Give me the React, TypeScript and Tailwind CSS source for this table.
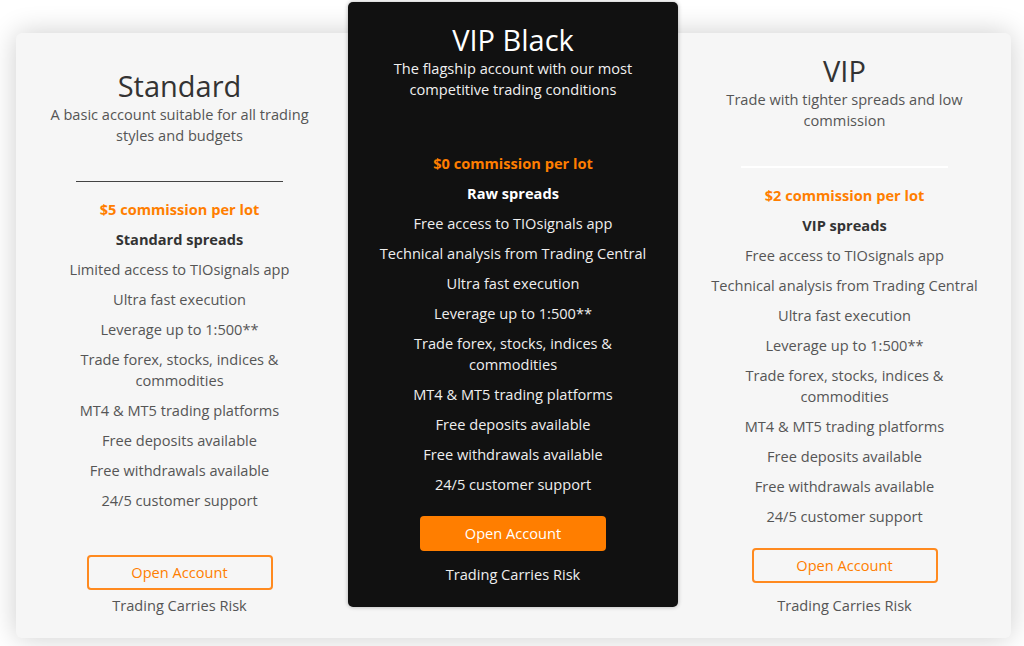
type Plan = {
  title: string;
  subtitle: string;
  commission: string;
  spreads: string;
  features: string[];
};

const standard: Plan = {
  title: "Standard",
  subtitle: "A basic account suitable for all trading styles and budgets",
  commission: "$5 commission per lot",
  spreads: "Standard spreads",
  features: [
    "Limited access to TIOsignals app",
    "Ultra fast execution",
    "Leverage up to 1:500**",
    "Trade forex, stocks, indices & commodities",
    "MT4 & MT5 trading platforms",
    "Free deposits available",
    "Free withdrawals available",
    "24/5 customer support",
  ],
};

const vipBlack: Plan = {
  title: "VIP Black",
  subtitle: "The flagship account with our most competitive trading conditions",
  commission: "$0 commission per lot",
  spreads: "Raw spreads",
  features: [
    "Free access to TIOsignals app",
    "Technical analysis from Trading Central",
    "Ultra fast execution",
    "Leverage up to 1:500**",
    "Trade forex, stocks, indices & commodities",
    "MT4 & MT5 trading platforms",
    "Free deposits available",
    "Free withdrawals available",
    "24/5 customer support",
  ],
};

const vip: Plan = {
  title: "VIP",
  subtitle: "Trade with tighter spreads and low commission",
  commission: "$2 commission per lot",
  spreads: "VIP spreads",
  features: [
    "Free access to TIOsignals app",
    "Technical analysis from Trading Central",
    "Ultra fast execution",
    "Leverage up to 1:500**",
    "Trade forex, stocks, indices & commodities",
    "MT4 & MT5 trading platforms",
    "Free deposits available",
    "Free withdrawals available",
    "24/5 customer support",
  ],
};

function PlanBody({ plan, dark }: { plan: Plan; dark?: boolean }) {
  return (
    <>
      <h2 className={`text-[29px] leading-[36px] font-normal ${dark ? "text-white" : "text-[#333]"}`}>{plan.title}</h2>
      <p className={`max-w-[272px] text-[14.6px] leading-[21px] ${dark ? "text-[#f0f0f0]" : "text-[#555]"}`}>{plan.subtitle}</p>
      <div
        className={`mt-[35px] w-[207px] border-t ${
          dark ? "border-[#111]" : plan.title === "VIP" ? "border-white border-t-2" : "border-[#444]"
        }`}
      />
      <ul className="mt-[17px] flex max-w-[270px] flex-col gap-[9px] text-[14.6px] leading-[21px]">
        <li className="font-bold text-[#ff7e00]">{plan.commission}</li>
        <li className={`font-bold ${dark ? "text-white" : "text-[#333]"}`}>{plan.spreads}</li>
        {plan.features.map((f) => (
          <li key={f} className={dark ? "text-[#eee]" : "text-[#555]"}>
            {f}
          </li>
        ))}
      </ul>
    </>
  );
}

export default function App() {
  return (
    <div
      className="h-[646px] w-[1024px] overflow-hidden bg-white pl-[16px] pt-[33px]"
      style={{ fontFamily: '"Open Sans", "Noto Sans", sans-serif' }}
    >
      <div className="grid h-[605px] w-[995px] grid-cols-[332px_330px_333px] rounded-[6px] bg-[#f6f6f6] text-center shadow-[0_0_28px_rgba(0,0,0,0.2)]">
        {/* Standard */}
        <div className="flex flex-col items-center pr-[5px] pt-[35px]">
          <PlanBody plan={standard} />
          <button className="mt-[44px] h-[35px] w-[186px] rounded-[4px] border-2 border-[#ff8a1f] text-[14.6px] text-[#ff7e00]">
            Open Account
          </button>
          <p className="mt-[5px] text-[14.6px] leading-[21px] text-[#555]">Trading Carries Risk</p>
        </div>

        {/* VIP Black */}
        <div className="-mt-[31px] flex h-[605px] flex-col items-center rounded-[5px] bg-[#111] pt-[20px] shadow-[0_0_4px_rgba(0,0,0,0.3)]">
          <PlanBody plan={vipBlack} dark />
          <button className="mt-[21px] h-[35px] w-[186px] rounded-[4px] bg-[#ff7e00] text-[14.6px] text-white">
            Open Account
          </button>
          <p className="mt-[13px] text-[14.6px] leading-[21px] text-[#eee]">Trading Carries Risk</p>
        </div>

        {/* VIP */}
        <div className="flex flex-col items-center pt-[20px]">
          <PlanBody plan={vip} />
          <button className="mt-[21px] h-[35px] w-[186px] rounded-[4px] border-2 border-[#ff8a1f] text-[14.6px] text-[#ff7e00]">
            Open Account
          </button>
          <p className="mt-[12px] text-[14.6px] leading-[21px] text-[#555]">Trading Carries Risk</p>
        </div>
      </div>
    </div>
  );
}
